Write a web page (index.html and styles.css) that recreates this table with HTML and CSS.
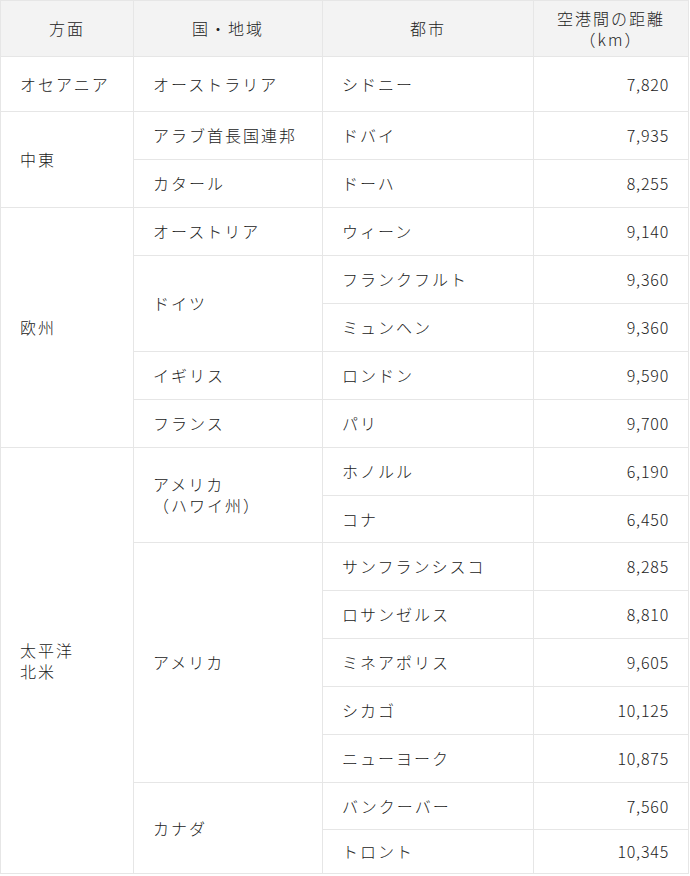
FILE: index.html
```html
<!DOCTYPE html>
<html lang="ja">
<head>
<meta charset="utf-8">
<link rel="stylesheet" href="styles.css">
</head>
<body>
<table class="dist">
  <colgroup>
    <col class="c1"><col class="c2"><col class="c3"><col class="c4">
  </colgroup>
  <thead>
    <tr class="head">
      <th>方面</th>
      <th>国・地域</th>
      <th>都市</th>
      <th>空港間の距離<br>（km）</th>
    </tr>
  </thead>
  <tbody>
    <tr class="r-first"><td>オセアニア</td><td>オーストラリア</td><td>シドニー</td><td class="num">7,820</td></tr>
    <tr><td rowspan="2">中東</td><td>アラブ首長国連邦</td><td>ドバイ</td><td class="num">7,935</td></tr>
    <tr><td>カタール</td><td>ドーハ</td><td class="num">8,255</td></tr>
    <tr><td rowspan="5">欧州</td><td>オーストリア</td><td>ウィーン</td><td class="num">9,140</td></tr>
    <tr><td rowspan="2">ドイツ</td><td>フランクフルト</td><td class="num">9,360</td></tr>
    <tr><td>ミュンヘン</td><td class="num">9,360</td></tr>
    <tr><td>イギリス</td><td>ロンドン</td><td class="num">9,590</td></tr>
    <tr><td>フランス</td><td>パリ</td><td class="num">9,700</td></tr>
    <tr><td rowspan="9">太平洋<br>北米</td><td rowspan="2">アメリカ<br>（ハワイ州）</td><td>ホノルル</td><td class="num">6,190</td></tr>
    <tr class="r-47"><td>コナ</td><td class="num">6,450</td></tr>
    <tr><td rowspan="5">アメリカ</td><td>サンフランシスコ</td><td class="num">8,285</td></tr>
    <tr><td>ロサンゼルス</td><td class="num">8,810</td></tr>
    <tr><td>ミネアポリス</td><td class="num">9,605</td></tr>
    <tr><td>シカゴ</td><td class="num">10,125</td></tr>
    <tr><td>ニューヨーク</td><td class="num">10,875</td></tr>
    <tr class="r-47"><td rowspan="2">カナダ</td><td>バンクーバー</td><td class="num">7,560</td></tr>
    <tr class="r-last"><td>トロント</td><td class="num">10,345</td></tr>
  </tbody>
</table>
</body>
</html>
```
FILE: styles.css
```css
html, body {
  margin: 0;
  padding: 0;
  background: #ffffff;
}

.dist {
  border-collapse: collapse;
  table-layout: fixed;
  width: 688px;
  font-family: "Noto Sans CJK JP", "Noto Sans", sans-serif;
  font-size: 16px;
  font-weight: 300;
  line-height: 21px;
  color: #222222;
  letter-spacing: 2px;
}

.c1 { width: 133px; }
.c2 { width: 189px; }
.c3 { width: 211px; }
.c4 { width: 155px; }

.dist th,
.dist td {
  border: 1px solid #e6e6e6;
  padding: 0 19px 0 19px;
  vertical-align: middle;
  text-align: left;
  font-weight: 300;
}

.dist td {
  height: 48px;
  box-sizing: border-box;
}

.dist .head th {
  height: 56px;
  background: #f3f3f3;
  text-align: center;
  box-sizing: border-box;
  padding: 0 8px;
}

.dist td.num {
  text-align: right;
  letter-spacing: 0.05em;
}

.dist .r-first td {
  height: 55px;
}

.dist .r-47 td {
  height: 47px;
}

.dist .r-last td {
  height: 44px;
}
```
